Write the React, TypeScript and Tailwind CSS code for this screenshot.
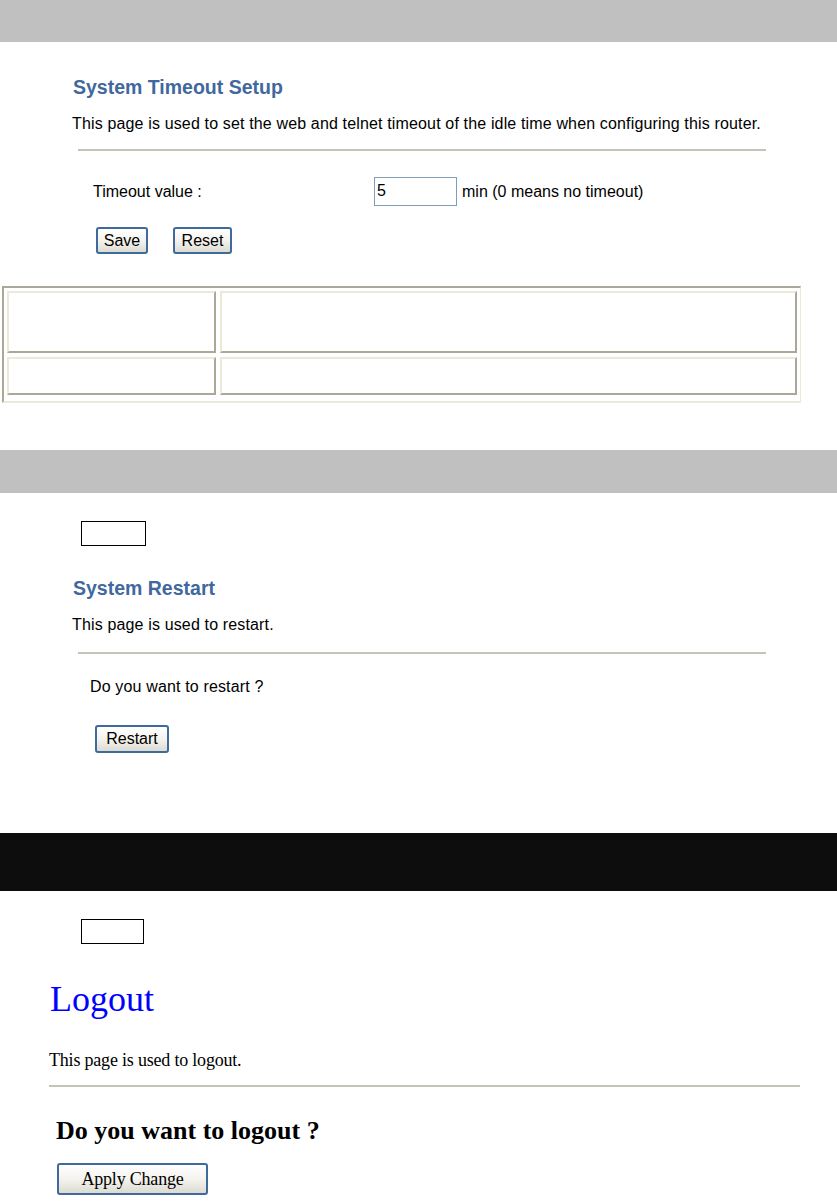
import React from "react";

const sans = { fontFamily: '"Liberation Sans", Arial, sans-serif' };
const serif = { fontFamily: '"Liberation Serif", "Times New Roman", serif' };

function XpButton({ label, className, textClass }: { label: string; className: string; textClass?: string }) {
  return (
    <button
      className={`flex items-center justify-center rounded-[3px] border-2 border-[#3e6a9c] bg-gradient-to-b from-white via-[#f4f3ee] to-[#dcdbd2] text-black ${className}`}
    >
      <span className={textClass ?? "text-[16px] leading-none"}>{label}</span>
    </button>
  );
}

export default function App() {
  return (
    <div className="w-[837px] h-[1202px] bg-white overflow-hidden flex flex-col text-black" style={sans}>
      {/* Section 1 */}
      <div className="h-[42px] shrink-0 bg-[#c0c0c0]" />
      <div className="h-[34px] shrink-0" />
      <div className="h-[24px] shrink-0 pl-[73px] flex items-center">
        <span className="text-[19.5px] font-bold text-[#41689e] leading-none">System Timeout Setup</span>
      </div>
      <div className="h-[14px] shrink-0" />
      <div className="h-[20px] shrink-0 pl-[72px] flex items-center">
        <span className="text-[16px] leading-none tracking-[0.15px]">
          This page is used to set the web and telnet timeout of the idle time when configuring this router.
        </span>
      </div>
      <div className="h-[15px] shrink-0" />
      <div className="ml-[78px] w-[688px] h-[2px] shrink-0 bg-[#c6c3b8]" />
      <div className="h-[26px] shrink-0" />
      <div className="h-[29px] shrink-0 flex items-center">
        <span className="ml-[93px] w-[281px] text-[16px] leading-none">Timeout value :</span>
        <div className="w-[83px] h-[29px] border border-[#7f9db9] bg-white flex items-start pl-[2px] pt-[5px]">
          <span className="text-[16px] leading-none">5</span>
        </div>
        <span className="ml-[5px] text-[16px] leading-none">min (0 means no timeout)</span>
      </div>
      <div className="h-[21px] shrink-0" />
      <div className="h-[27px] shrink-0 flex items-center">
        <XpButton label="Save" className="ml-[96px] w-[52px] h-[27px]" />
        <XpButton label="Reset" className="ml-[25px] w-[59px] h-[27px]" />
      </div>
      <div className="h-[32px] shrink-0" />
      <div className="ml-[2px] w-[799px] h-[117px] shrink-0 border-t-2 border-l-2 border-b-2 border-r border-t-[#aca899] border-l-[#aca899] border-b-[#ece9d8] border-r-[#ece9d8] p-[3px] flex flex-col gap-[4px]">
        <div className="flex gap-[4px] h-[62px]">
          <div className="w-[209px] h-full border-2 border-t-[#ece9d8] border-l-[#ece9d8] border-b-[#aca899] border-r-[#aca899]" />
          <div className="flex-1 h-full border-2 border-t-[#ece9d8] border-l-[#ece9d8] border-b-[#aca899] border-r-[#aca899]" />
        </div>
        <div className="flex gap-[4px] h-[38px]">
          <div className="w-[209px] h-full border-2 border-t-[#ece9d8] border-l-[#ece9d8] border-b-[#aca899] border-r-[#aca899]" />
          <div className="flex-1 h-full border-2 border-t-[#ece9d8] border-l-[#ece9d8] border-b-[#aca899] border-r-[#aca899]" />
        </div>
      </div>

      {/* Section 2 */}
      <div className="h-[47px] shrink-0" />
      <div className="h-[43px] shrink-0 bg-[#c0c0c0]" />
      <div className="h-[28px] shrink-0" />
      <div className="ml-[81px] w-[65px] h-[25px] shrink-0 border border-black" />
      <div className="h-[31px] shrink-0" />
      <div className="h-[24px] shrink-0 pl-[73px] flex items-center">
        <span className="text-[19.5px] font-bold text-[#41689e] leading-none">System Restart</span>
      </div>
      <div className="h-[14px] shrink-0" />
      <div className="h-[20px] shrink-0 pl-[72px] flex items-center">
        <span className="text-[16px] leading-none tracking-[0.15px]">This page is used to restart.</span>
      </div>
      <div className="h-[17px] shrink-0" />
      <div className="ml-[78px] w-[688px] h-[2px] shrink-0 bg-[#c6c3b8]" />
      <div className="h-[23px] shrink-0" />
      <div className="h-[20px] shrink-0 pl-[90px] flex items-center">
        <span className="text-[16px] leading-none tracking-[0.15px]">Do you want to restart ?</span>
      </div>
      <div className="h-[28px] shrink-0" />
      <div className="h-[28px] shrink-0 flex items-center">
        <XpButton label="Restart" className="ml-[95px] w-[74px] h-[28px]" />
      </div>

      {/* Section 3 */}
      <div className="h-[80px] shrink-0" />
      <div className="h-[58px] shrink-0 bg-[#0d0d0d]" />
      <div className="h-[28px] shrink-0" />
      <div className="ml-[81px] w-[63px] h-[25px] shrink-0 border border-black" />
      <div className="h-[35px] shrink-0" />
      <div className="h-[40px] shrink-0 pl-[50px] flex items-center" style={serif}>
        <span className="text-[36px] leading-none text-[#0000ff]">Logout</span>
      </div>
      <div className="h-[31px] shrink-0" />
      <div className="h-[20px] shrink-0 pl-[49px] flex items-center" style={serif}>
        <span className="text-[18px] leading-none tracking-[-0.2px]">This page is used to logout.</span>
      </div>
      <div className="h-[15px] shrink-0" />
      <div className="ml-[49px] w-[751px] h-[2px] shrink-0 bg-[#c6c3b8]" />
      <div className="h-[29px] shrink-0" />
      <div className="h-[30px] shrink-0 pl-[56px] flex items-center" style={serif}>
        <span className="text-[26px] font-bold leading-none">Do you want to logout ?</span>
      </div>
      <div className="h-[17px] shrink-0" />
      <div className="h-[32px] shrink-0 flex items-center" style={serif}>
        <XpButton label="Apply Change" className="ml-[57px] w-[151px] h-[32px]" textClass="text-[18px] leading-none tracking-[-0.2px]" />
      </div>
    </div>
  );
}
